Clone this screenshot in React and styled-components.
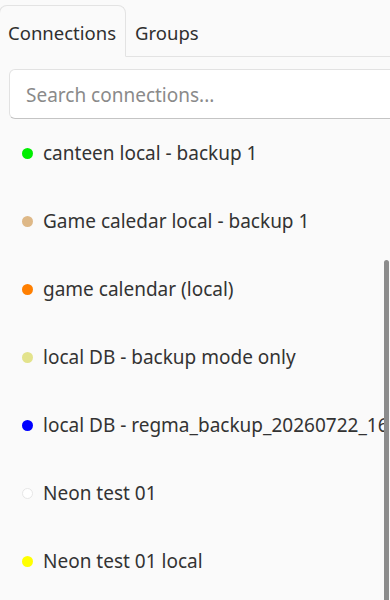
import React from 'react'
import styled, { createGlobalStyle } from 'styled-components'

const connections = [
    { name: 'canteen local - backup 1', color: '#00ee00' },
    { name: 'Game caledar local - backup 1', color: '#deb887' },
    { name: 'game calendar (local)', color: '#ff7f00' },
    { name: 'local DB - backup mode only', color: '#e3e38c' },
    { name: 'local DB - regma_backup_20260722_16', color: '#0000ff' },
    { name: 'Neon test 01', color: '#ffffff', outline: true },
    { name: 'Neon test 01 local', color: '#ffff00' },
]

const GlobalStyle = createGlobalStyle`
  html, body {
    margin: 0;
    background: #fafafa;
  }
  body {
    font-family: "Noto Sans", "Open Sans", sans-serif;
    color: #333333;
  }
`

const Panel = styled.div`
  position: relative;
  width: 390px;
  height: 600px;
  overflow: hidden;
  display: flex;
  flex-direction: column;
`

const TabBar = styled.div`
  display: flex;
  align-items: flex-end;
  height: 57px;
  box-sizing: border-box;
  border-bottom: 1px solid #e3e3e3;
`

const Tab = styled.div`
  height: 52px;
  box-sizing: border-box;
  padding: 2px 9px 0 8px;
  margin-bottom: -1px;
  display: flex;
  align-items: center;
  font-size: 18.5px;
  color: #2f2f2f;
  border: 1px solid ${p => (p.$active ? '#e3e3e3' : 'transparent')};
  border-bottom-color: ${p => (p.$active ? '#fafafa' : 'transparent')};
  border-radius: 8px 8px 0 0;
  margin-left: ${p => (p.$active ? '-1px' : '0')};
`

const SearchRow = styled.div`
  padding: 12px 0 0 9px;
`

const SearchInput = styled.input`
  width: 420px;
  height: 50px;
  box-sizing: border-box;
  padding: 2px 16px 0;
  font-family: inherit;
  font-size: 19px;
  color: #333;
  background: #ffffff;
  border: 1px solid #e2e2e2;
  border-bottom-color: #c4c4c4;
  border-radius: 6px;
  outline: none;

  &::placeholder {
    color: #8a8a8a;
  }
`

const List = styled.div`
  flex: 1;
  overflow: hidden;
  padding-right: 5px;
`

const Row = styled.div`
  height: 68px;
  display: flex;
  align-items: center;
  gap: 10px;
  padding-left: 22px;
  font-size: 19px;
  white-space: nowrap;
  overflow: hidden;
  color: #333333;
`

const Dot = styled.span`
  flex: none;
  width: 11px;
  height: 11px;
  border-radius: 50%;
  box-sizing: border-box;
  background: ${p => p.$color};
  border: ${p => (p.$outline ? '1px solid #e6e6e6' : 'none')};
`

const Thumb = styled.div`
  position: absolute;
  right: 1px;
  top: 260px;
  bottom: 0;
  width: 5px;
  border-radius: 3px 3px 0 0;
  background: #8c8c8c;
`

export default function App() {
    return (
        <>
            <GlobalStyle />
            <Panel>
                <TabBar>
                    <Tab $active>Connections</Tab>
                    <Tab>Groups</Tab>
                </TabBar>
                <SearchRow>
                    <SearchInput placeholder="Search connections..." />
                </SearchRow>
                <List>
                    {connections.map(c => (
                        <Row key={c.name}>
                            <Dot $color={c.color} $outline={c.outline} />
                            {c.name}
                        </Row>
                    ))}
                </List>
                <Thumb />
            </Panel>
        </>
    )
}
